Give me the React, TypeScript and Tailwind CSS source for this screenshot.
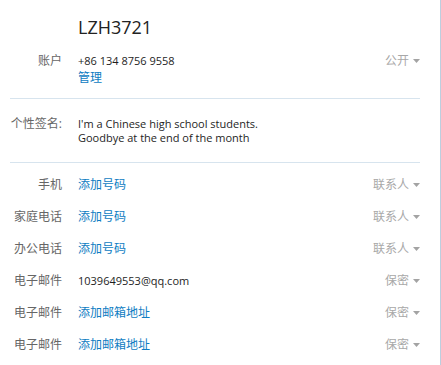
const font = "font-['Open_Sans','Noto_Sans_CJK_SC',sans-serif]";

const contactRows = [
  { label: "手机", value: "添加号码", link: true, privacy: "联系人" },
  { label: "家庭电话", value: "添加号码", link: true, privacy: "联系人" },
  { label: "办公电话", value: "添加号码", link: true, privacy: "联系人" },
  { label: "电子邮件", value: "1039649553@qq.com", link: false, privacy: "保密" },
  { label: "电子邮件", value: "添加邮箱地址", link: true, privacy: "保密" },
  { label: "电子邮件", value: "添加邮箱地址", link: true, privacy: "保密" },
];

function Caret() {
  return (
    <svg width="7" height="4" viewBox="0 0 7 4" className="ml-[4px] shrink-0">
      <path d="M0 0h7L3.5 4z" fill="#a3a3a3" />
    </svg>
  );
}

function Privacy({ text }: { text: string }) {
  return (
    <div className="flex items-center text-[12px] text-[#a8a8a8]">
      <span>{text}</span>
      <Caret />
    </div>
  );
}

export default function App() {
  return (
    <div className={`${font} h-[365px] w-[441px] border-r border-[#bccfdf] bg-white`}>
      <div className="ml-[10px] w-[410px]">
        <h1 className="pl-[68px] pt-[14px] text-[18px] leading-[26px] text-[#222]">LZH3721</h1>

        <div className="mt-[12px] flex pb-[12px]">
          <div className="w-[52px] text-right text-[12px] leading-[17px] text-[#666]">账户</div>
          <div className="ml-[16px] flex-1 text-[11px] leading-[17px] text-[#1e1e1e]">
            <div>+86 134 8756 9558</div>
            <div className="text-[12px] text-[#0e7cc2]">管理</div>
          </div>
          <div className="h-[17px] self-start">
            <Privacy text="公开" />
          </div>
        </div>

        <div className="h-px bg-[#d7e4ee]" />

        <div className="flex pb-[17px] pt-[18px]">
          <div className="w-[52px] text-right text-[12px] leading-[14px] text-[#666]">个性签名:</div>
          <div className="ml-[16px] flex-1 text-[11px] leading-[14px] text-[#1e1e1e]">
            <div>I'm a Chinese high school students.</div>
            <div>Goodbye at the end of the month</div>
          </div>
        </div>

        <div className="h-px bg-[#d7e4ee]" />

        <div className="pt-[6px]">
          {contactRows.map((row, i) => (
            <div key={i} className="flex h-8 items-center">
              <div className="w-[52px] text-right text-[12px] text-[#666]">{row.label}</div>
              <div
                className={`ml-[16px] flex-1 ${
                  row.link ? "text-[12px] text-[#0e7cc2]" : "text-[11px] text-[#1e1e1e]"
                }`}
              >
                {row.value}
              </div>
              <Privacy text={row.privacy} />
            </div>
          ))}
        </div>
      </div>
    </div>
  );
}
